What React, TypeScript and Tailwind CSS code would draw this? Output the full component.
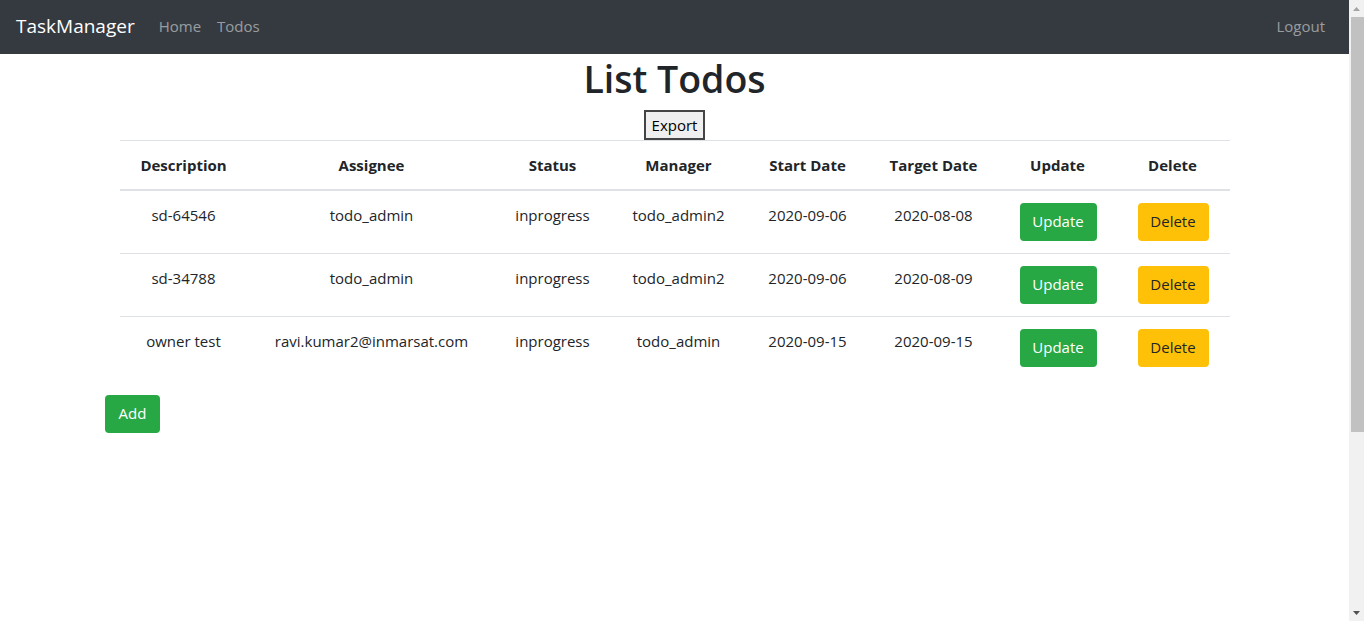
import React from "react";

const rows = [
  { d: "sd-64546", a: "todo_admin", s: "inprogress", m: "todo_admin2", sd: "2020-09-06", td: "2020-08-08" },
  { d: "sd-34788", a: "todo_admin", s: "inprogress", m: "todo_admin2", sd: "2020-09-06", td: "2020-08-09" },
  { d: "owner test", a: "ravi.kumar2@inmarsat.com", s: "inprogress", m: "todo_admin", sd: "2020-09-15", td: "2020-09-15" },
];

const widths = ["w-[128px]", "w-[248px]", "w-[114px]", "w-[138px]", "w-[120px]", "w-[132px]", "w-[116px]", "w-[114px]"];
const heads = ["Description", "Assignee", "Status", "Manager", "Start Date", "Target Date", "Update", "Delete"];

export default function App() {
  return (
    <div
      className="flex h-[621px] w-[1364px] overflow-hidden bg-white text-[#212529]"
      style={{ fontFamily: '"Open Sans", "Noto Sans", sans-serif' }}
    >
      <div className="flex-1 min-w-0">
        <nav className="flex h-[54px] items-center bg-[#343a40] px-4 pb-[2px]">
          <span className="text-[19px] text-white mr-4">TaskManager</span>
          <span className="px-2 text-[15px] text-white/50">Home</span>
          <span className="px-2 text-[15px] text-white/50">Todos</span>
          <span className="ml-auto px-2 text-[15px] text-white/50">Logout</span>
        </nav>
        <div className="mx-auto w-[1140px]">
          <div className="px-[15px]">
            <h1 className="text-center text-[37.5px] font-semibold leading-[48px] mt-[1px] mb-[7px]">List Todos</h1>
            <div className="flex justify-center">
              <button className="h-[30px] w-[61px] border-2 border-[#444] bg-[#efefef] text-[15px] text-black">Export</button>
            </div>
            <table className="w-[1110px] table-fixed border-collapse text-[15px]">
              <thead>
                <tr className="border-t border-[#dee2e6] border-b-2">
                  {heads.map((h, i) => (
                    <th key={h} className={`${widths[i]} h-[49px] px-3 text-center font-bold align-middle`}>{h}</th>
                  ))}
                </tr>
              </thead>
              <tbody>
                {rows.map((r, idx) => (
                  <tr key={idx} className={idx > 0 ? "border-t border-[#dee2e6]" : ""}>
                    {[r.d, r.a, r.s, r.m, r.sd, r.td].map((c, i) => (
                      <td key={i} className="px-3 py-[12px] text-center align-top leading-6 whitespace-nowrap">{c}</td>
                    ))}
                    <td className="px-3 py-[12px] text-center align-top">
                      <button className="block ml-[8px] h-[38px] w-[77px] rounded bg-[#28a745] text-white text-[15px]">Update</button>
                    </td>
                    <td className="px-3 py-[12px] text-center align-top">
                      <button className="block ml-[10px] h-[38px] w-[71px] rounded bg-[#ffc107] text-[#212529] text-[15px]">Delete</button>
                    </td>
                  </tr>
                ))}
              </tbody>
            </table>
          </div>
          <div className="mt-[16px]">
            <button className="ml-[0.5px] h-[38px] w-[55px] rounded bg-[#28a745] text-white text-[15px]">Add</button>
          </div>
        </div>
      </div>
      <div className="flex w-[15px] flex-col bg-[#f1f1f1]">
        <div className="flex h-[17px] items-center justify-center">
          <svg width="7" height="4" viewBox="0 0 7 4"><polygon points="3.5,0 7,4 0,4" fill="#a3a3a3" /></svg>
        </div>
        <div className="ml-[2px] h-[415px] bg-[#c1c1c1]" />
        <div className="flex-1" />
        <div className="flex h-[17px] items-center justify-center">
          <svg width="7" height="4" viewBox="0 0 7 4"><polygon points="0,0 7,0 3.5,4" fill="#505050" /></svg>
        </div>
      </div>
    </div>
  );
}
